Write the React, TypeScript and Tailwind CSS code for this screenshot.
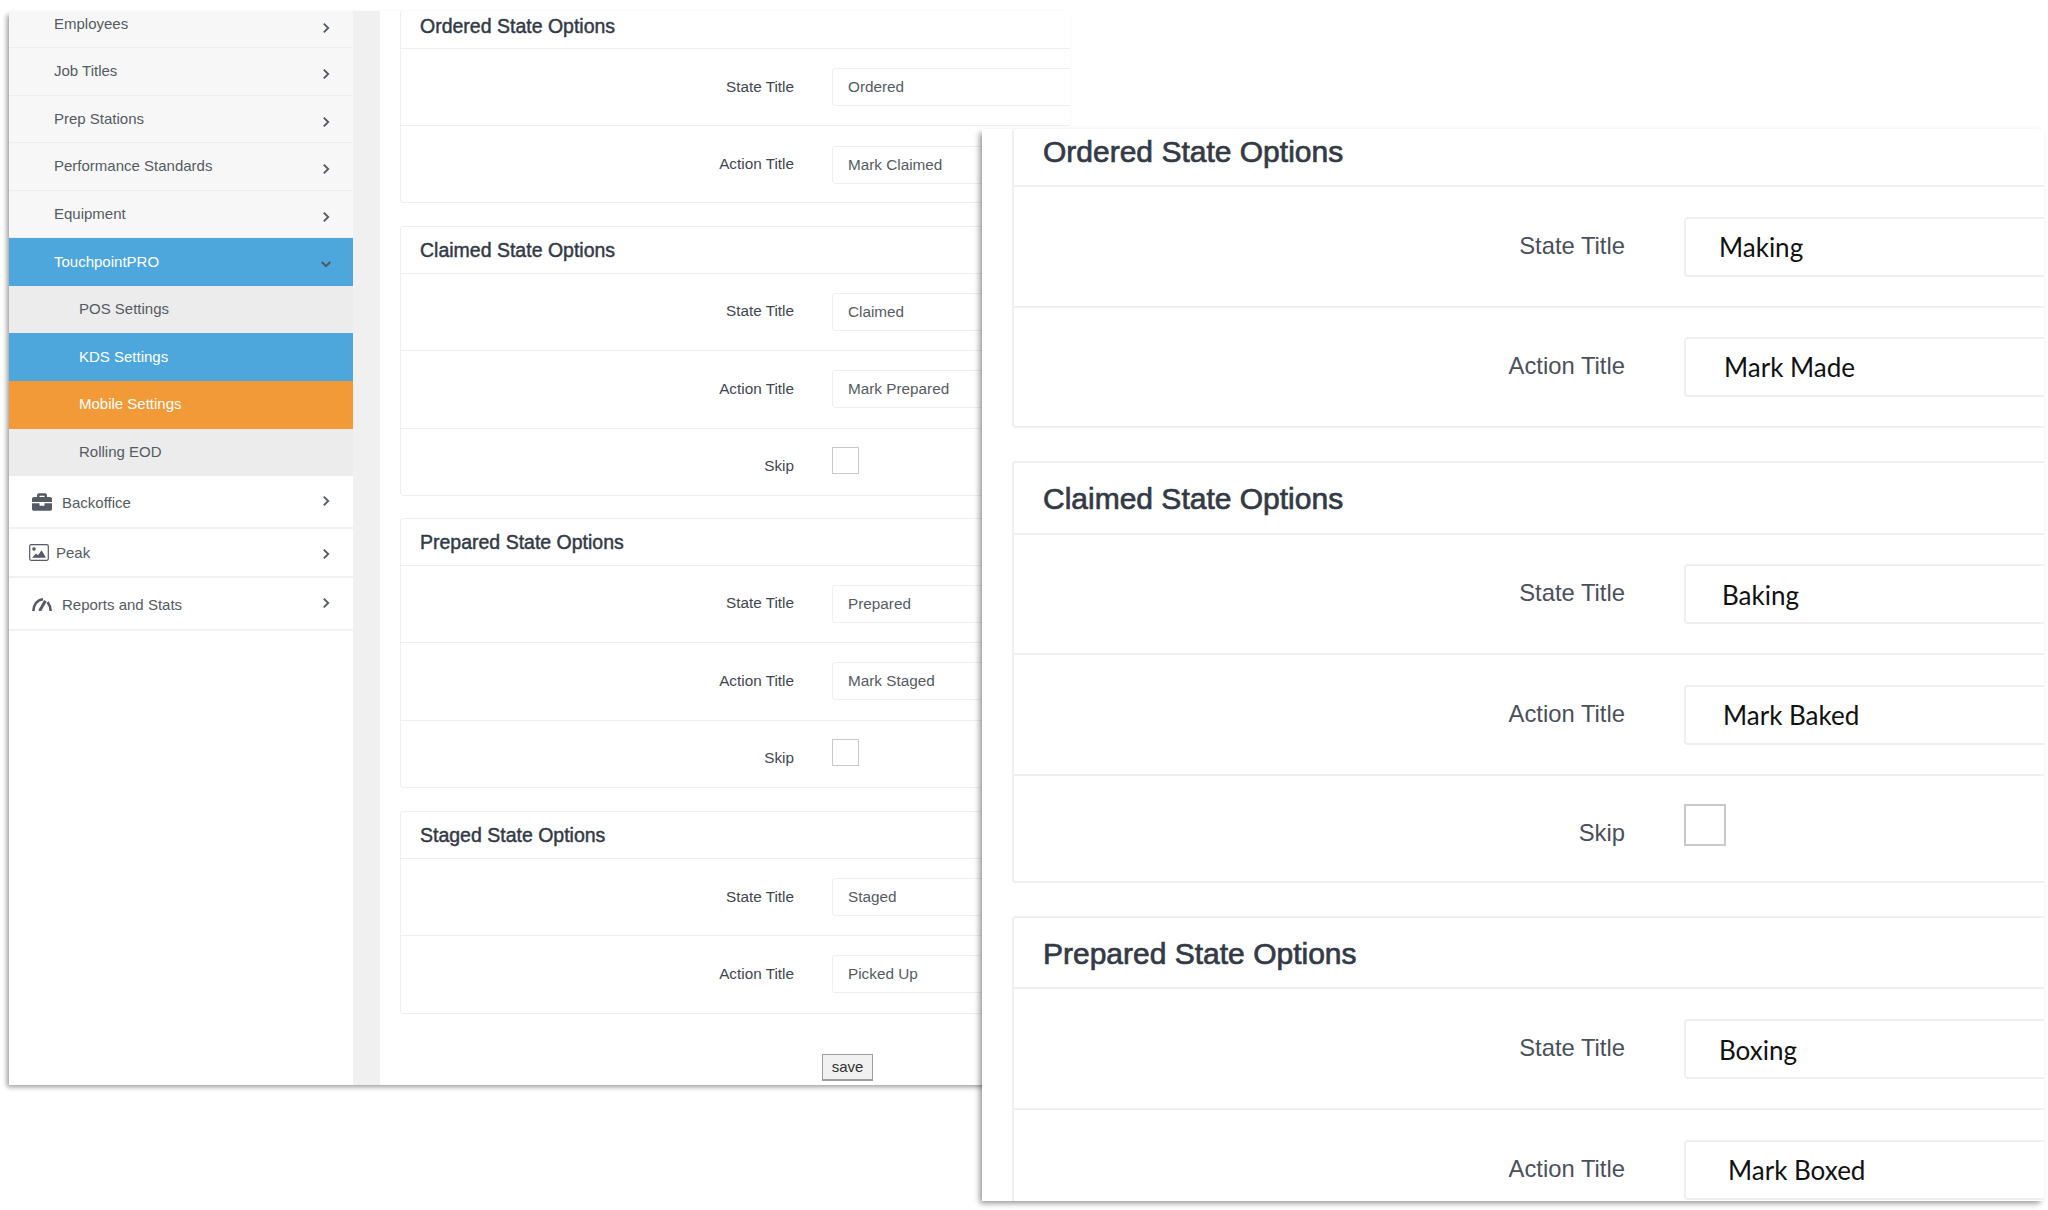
import React from "react";
import { FaBriefcase } from "react-icons/fa";

const Chevron = ({ down = false, className = "" }: { down?: boolean; className?: string }) => (
  <svg viewBox="0 0 12 12" className={`w-[12px] h-[12px] ${className}`} fill="none" stroke="currentColor" strokeWidth="1.9">
    {down ? <path d="M1.8 4 6 8.2 10.2 4" /> : <path d="M3.8 1.6 8.2 6l-4.4 4.4" />}
  </svg>
);

const Gauge = () => (
  <svg viewBox="0 0 20 14" className="w-[20px] h-[14px]" fill="none" stroke="#555b64">
    <path d="M1.4 14 C1.4 8 5 2.8 11 2.2" strokeWidth="2.6" />
    <path d="M15.6 5 C17.4 7.5 18.6 10.5 18.7 14" strokeWidth="2.6" />
    <path d="M7.6 14 L13.4 3.8" strokeWidth="3" />
  </svg>
);

const Picture = () => (
  <svg viewBox="0 0 20 17" className="w-[20px] h-[17px]">
    <rect x="0.7" y="0.7" width="18.6" height="15.6" rx="1.5" fill="none" stroke="#555b64" strokeWidth="1.2" />
    <circle cx="5" cy="5" r="1.8" fill="#555b64" />
    <path d="M3 13.8 7 9.6 9 11.2 12.6 6.2 17 13.8Z" fill="#555b64" />
  </svg>
);

const sans = "font-['Liberation_Sans',Arial,sans-serif]";

type Variant = {
  panel: string; title: string; row: string; label: string; input: string; check: string; skipLabel: string;
};

const back: Variant = {
  panel: "border-[1.5px] border-[#efefef] rounded-[3px] w-[900px] bg-white",
  title: "text-[19.5px] leading-[22px] pl-[19px] [-webkit-text-stroke:0.45px_#333a46]",
  row: "border-t-[1.5px] border-[#efefef]",
  label: "w-[393px] shrink-0 text-[15.3px] text-[#3f4650] text-right",
  input: "ml-[38px] w-[600px] shrink-0 h-[38px] border-[1.5px] border-[#efefef] rounded-[3px] text-[15.3px] text-[#555b63] pl-[15px] pt-[1px] " + sans,
  check: "ml-[38px] w-[27px] h-[27px] shrink-0 border-[1.5px] border-[#c9c9c9] mt-[18.5px]",
  skipLabel: "w-[393px] shrink-0 text-[15.3px] text-[#3f4650] text-right mt-[26.5px]",
};

const front: Variant = {
  panel: "border-2 border-[#efefef] rounded-[4px] w-[1200px] bg-white",
  title: "text-[30px] leading-[32px] pl-[29px] [-webkit-text-stroke:0.7px_#333a46]",
  row: "border-t-2 border-[#efefef]",
  label: "w-[611px] shrink-0 text-[23.8px] text-[#4a505b] text-right mb-[2px]",
  input: "ml-[59px] w-[600px] shrink-0 h-[60px] border-2 border-[#efefef] rounded-[4px] text-[26px] text-[#111] font-['Lato',sans-serif]",
  check: "ml-[59px] w-[42px] h-[42px] shrink-0 border-2 border-[#c9c9c9] mt-[28px]",
  skipLabel: "w-[611px] shrink-0 text-[23.8px] text-[#4a505b] text-right mt-[39px]",
};

type Row = { label: string; value?: string; h: string; pad?: string; extra?: string };

function Panel({ v, title, headH, rows, className = "" }: { v: Variant; title: string; headH: string; rows: Row[]; className?: string }) {
  return (
    <section className={`${v.panel} ${className}`}>
      <div className={`${headH} flex items-end ${v.title} text-[#333a46]`}>{title}</div>
      {rows.map((r) =>
        r.value ? (
          <div key={r.label} className={`${v.row} ${r.h} ${r.extra ?? ""} flex items-center`}>
            <div className={v.label}>{r.label}</div>
            <div className={`${v.input} ${r.pad ?? ""} flex items-center`}>{r.value}</div>
          </div>
        ) : (
          <div key={r.label} className={`${v.row} ${r.h} flex items-start`}>
            <div className={v.skipLabel}>{r.label}</div>
            <div className={v.check} />
          </div>
        )
      )}
    </section>
  );
}

const topItems = ["Employees", "Job Titles", "Prep Stations", "Performance Standards", "Equipment"];
const subItems = [
  { t: "POS Settings", c: "bg-[#ececec] text-[#555b63]" },
  { t: "KDS Settings", c: "bg-[#4ea7dc] text-white" },
  { t: "Mobile Settings", c: "bg-[#f39a38] text-white" },
  { t: "Rolling EOD", c: "bg-[#ececec] text-[#555b63]" },
];

function Sidebar() {
  return (
    <aside className="w-[344px] shrink-0 bg-white text-[15px] text-[#555b63]">
      {topItems.map((t, i) => (
        <div key={t} className={`${i === 0 ? "h-[37px] pb-[9px]" : "h-[47.5px]"} bg-[#f7f7f7] border-b-[1.5px] border-[#eeeeee] pl-[45px] pr-[21px] flex items-center justify-between`}>
          <span>{t}</span>
          <Chevron className="mt-[6px]" />
        </div>
      ))}
      <div className="h-[47.5px] bg-[#4ea7dc] text-white pl-[45px] pr-[21px] flex items-center justify-between">
        <span>TouchpointPRO</span>
        <Chevron down className="text-[#4c5560] mt-[4px]" />
      </div>
      {subItems.map((s) => (
        <div key={s.t} className={`h-[47.7px] ${s.c} pl-[70px] flex items-center`}>{s.t}</div>
      ))}
      <div className="h-[53px] border-b-2 border-[#f2f2f2] pl-[23px] pr-[21px] flex items-center justify-between">
        <div className="flex items-center">
          <FaBriefcase className="w-[20px] h-[20px] text-[#555b64] mr-[10px]" />
          <span className="mt-[3px]">Backoffice</span>
        </div>
        <Chevron className="mb-[1px]" />
      </div>
      <div className="h-[49px] border-b-2 border-[#f2f2f2] pl-[20px] pr-[21px] flex items-center justify-between">
        <div className="flex items-center">
          <Picture />
          <span className="ml-[7px]">Peak</span>
        </div>
        <Chevron className="mt-[3px]" />
      </div>
      <div className="h-[53px] border-b-2 border-[#f2f2f2] pl-[23px] pr-[21px] flex items-center justify-between">
        <div className="flex items-center">
          <Gauge />
          <span className="ml-[10px] mt-[2px]">Reports and Stats</span>
        </div>
        <Chevron className="mb-[1px]" />
      </div>
    </aside>
  );
}

export default function App() {
  return (
    <div className={`relative w-[2048px] h-[1210px] bg-white overflow-hidden ${sans}`}>
      {/* back window */}
      <div className="absolute left-[9px] top-[11px] w-[1061px] h-[1074px] flex overflow-hidden bg-white shadow-[-3px_3px_5px_-1px_rgba(0,0,0,0.4)]">
        <Sidebar />
        <div className="w-[27px] shrink-0 bg-[#f0f0f0]" />
        <main className="pl-[20px] w-[900px] shrink-0">
          <Panel v={back} title="Ordered State Options" headH="h-[37px] pb-[11px]" className="border-t-0" rows={[
            { label: "State Title", value: "Ordered", h: "h-[77px]" },
            { label: "Action Title", value: "Mark Claimed", h: "h-[76.5px]", extra: "pt-[2px]" },
          ]} />
          <Panel v={back} title="Claimed State Options" headH="h-[46px] pb-[12px]" className="mt-[23px]" rows={[
            { label: "State Title", value: "Claimed", h: "h-[77px]" },
            { label: "Action Title", value: "Mark Prepared", h: "h-[78px]" },
            { label: "Skip", h: "h-[67.5px]" },
          ]} />
          <Panel v={back} title="Prepared State Options" headH="h-[46px] pb-[12px]" className="mt-[21.5px]" rows={[
            { label: "State Title", value: "Prepared", h: "h-[77px]" },
            { label: "Action Title", value: "Mark Staged", h: "h-[78px]" },
            { label: "Skip", h: "h-[67.5px]" },
          ]} />
          <Panel v={back} title="Staged State Options" headH="h-[46px] pb-[12px]" className="mt-[23px]" rows={[
            { label: "State Title", value: "Staged", h: "h-[77px]" },
            { label: "Action Title", value: "Picked Up", h: "h-[77.5px]" },
          ]} />
          <button className="block mt-[40px] ml-[422px] w-[51px] h-[27px] bg-[#f1f1f1] border border-[#9d9d9d] border-b-2 text-[15px] text-[#333] leading-none">save</button>
        </main>
      </div>

      {/* front window */}
      <div className="absolute left-[982px] top-[129px] w-[1062px] h-[1072px] overflow-hidden bg-white pl-[30px] shadow-[-3px_3px_6px_-1px_rgba(0,0,0,0.45)]">
        <Panel v={front} title="Ordered State Options" headH="h-[56px] pb-[17.5px]" className="border-t-0" rows={[
          { label: "State Title", value: "Making", h: "h-[121px]", pad: "pl-[33px] pt-[2px]" },
          { label: "Action Title", value: "Mark Made", h: "h-[120px]", pad: "pl-[38px] pt-[1px]" },
        ]} />
        <Panel v={front} title="Claimed State Options" headH="h-[70px] pb-[18px]" className="mt-[33px]" rows={[
          { label: "State Title", value: "Baking", h: "h-[120px]", pad: "pl-[36px] pt-[3px]" },
          { label: "Action Title", value: "Mark Baked", h: "h-[121px]", pad: "pl-[37px] pt-[2px]" },
          { label: "Skip", h: "h-[107px]" },
        ]} />
        <Panel v={front} title="Prepared State Options" headH="h-[69px] pb-[17.5px]" className="mt-[33px]" rows={[
          { label: "State Title", value: "Boxing", h: "h-[121px]", pad: "pl-[33px] pt-[3px]" },
          { label: "Action Title", value: "Mark Boxed", h: "h-[122px]", pad: "pl-[42px]" },
        ]} />
      </div>
    </div>
  );
}
